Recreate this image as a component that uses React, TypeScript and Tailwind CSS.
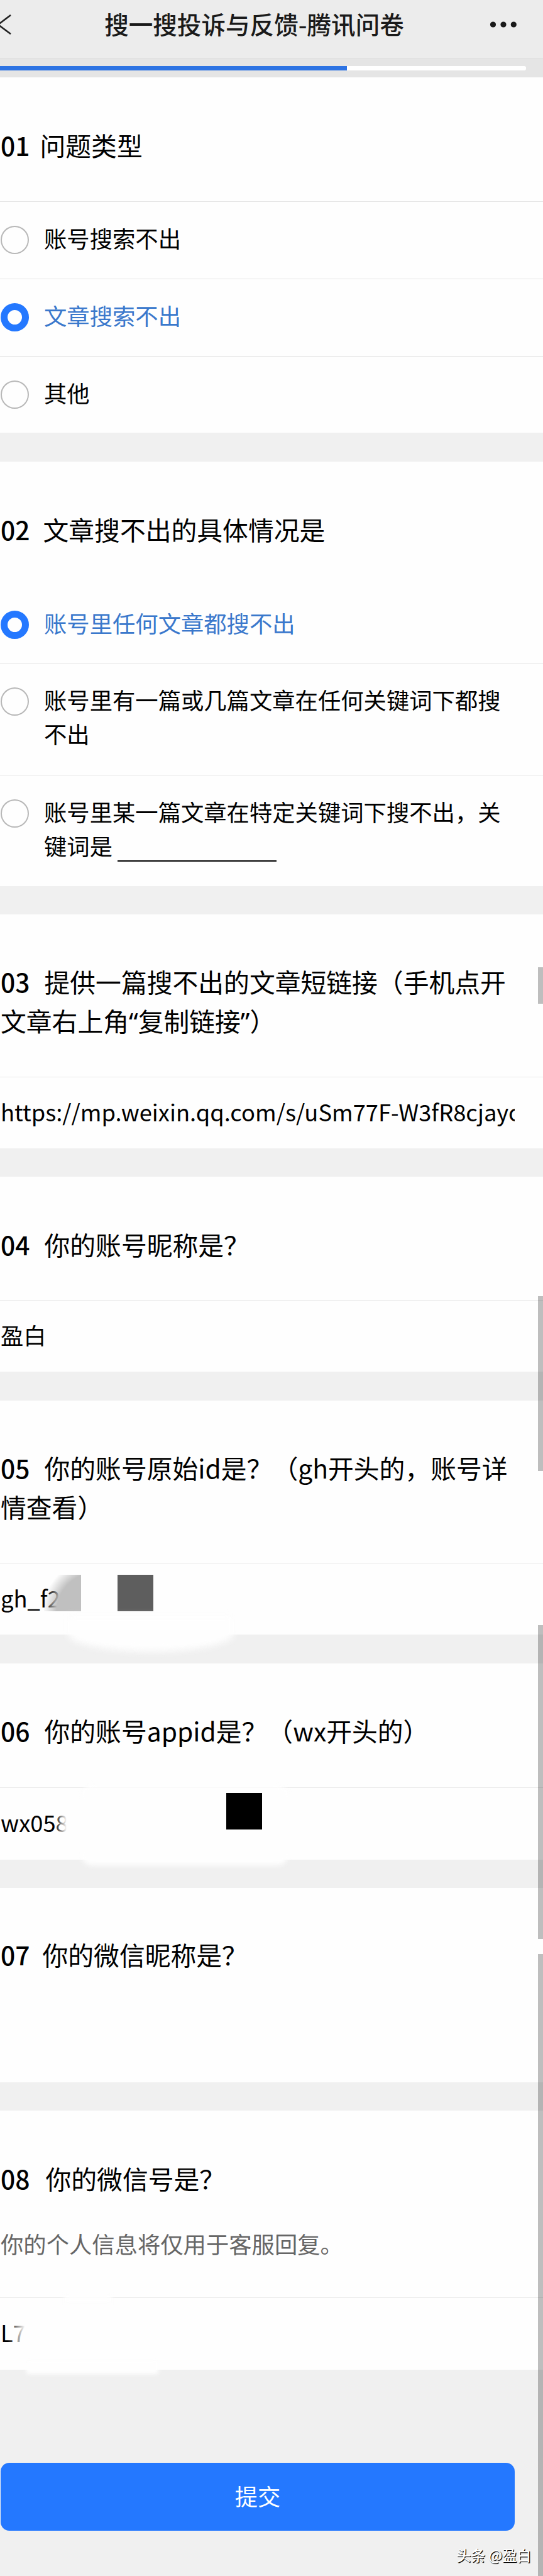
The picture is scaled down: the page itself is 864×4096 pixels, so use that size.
import React from 'react';

const singleOptions = [
  { id: 'account', lines: ['账号搜索不出'], height: 'h-[123px]', checked: false },
  { id: 'article', lines: ['文章搜索不出'], height: 'h-[123px]', checked: true },
  { id: 'other', lines: ['其他'], height: 'h-[122px]', checked: false },
];

const detailOptions = [
  { id: 'all', lines: ['账号里任何文章都搜不出'], height: 'h-[122px]', checked: true },
  { id: 'some', lines: ['账号里有一篇或几篇文章在任何关键词下都搜', '不出'], height: 'h-[178px]', checked: false },
  { id: 'keyword', lines: ['账号里某一篇文章在特定关键词下搜不出，关', '键词是'], height: 'h-[177px]', checked: false, blank: true },
];

function Title({
  no,
  lines,
  className,
  gap = 'mr-[23px]',
}: {
  no: string;
  lines: React.ReactNode[];
  className: string;
  gap?: string;
}) {
  return (
    <div className={`whitespace-nowrap pl-px text-[40.8px] leading-[61.5px] ${className}`}>
      {lines.map((line, i) => (
        <p key={i}>
          {i === 0 && <span className={`font-medium ${gap}`}>{no}</span>}
          {line}
        </p>
      ))}
    </div>
  );
}

function Option({ option, first }: { option: any; first?: boolean }) {
  return (
    <div
      className={`flex gap-6 border-t pl-px ${first ? 'border-transparent' : 'border-[#e4e4e4]'} ${option.height}`}
    >
      <span
        className={`mt-[38px] size-[45px] shrink-0 rounded-full ${
          option.checked ? 'border-[11px] border-[#2478ff]' : 'border-2 border-[#b8b8b8]'
        }`}
      />
      <div
        className={`pt-[30px] whitespace-nowrap text-[36.35px] leading-[54px] ${
          option.checked ? 'text-[#3a78cc]' : 'text-black'
        }`}
      >
        {option.lines.map((line: string, i: number) => (
          <p key={line} className="flex gap-2">
            {line}
            {option.blank && i === 1 && <span className="h-[53px] w-[253px] border-b-2 border-black" />}
          </p>
        ))}
      </div>
    </div>
  );
}

function Answer({ text, className, children }: { text: string; className: string; children?: React.ReactNode }) {
  return (
    <div className={`relative border-t border-[#e8e8e8] pl-px pt-[27px] ${className}`}>
      <p className="w-[818px] overflow-hidden whitespace-nowrap text-[36.35px] leading-[54px]">{text}</p>
      {children}
    </div>
  );
}

function Gap({ className }: { className: string }) {
  return <div className={`bg-[#f0f0f0] ${className}`} />;
}

export default function App() {
  return (
    <div className="relative h-[4096px] w-[864px] overflow-hidden bg-[#fefefe] font-['Noto_Sans_CJK_SC',sans-serif] text-black [text-spacing-trim:space-all]">
      <header className="flex h-[93px] items-center justify-between border-b border-[#dedede] bg-[#ececec] pb-[14px] pr-10">
        <svg className="shrink-0" width="20" height="32" viewBox="0 0 20 32" fill="none" stroke="#222" strokeWidth="2.6">
          <path d="M17 1L-3 16L17 31" />
        </svg>
        <h1 className="ml-[11px] whitespace-nowrap pb-1 text-[38.6px] font-medium leading-[60px] text-[#1a1a1a]">
          搜一搜投诉与反馈-腾讯问卷
        </h1>
        <svg className="shrink-0" width="46" height="12" viewBox="0 0 46 12" fill="#1a1a1a">
          <circle cx="6.5" cy="6" r="4.6" />
          <circle cx="23" cy="6" r="4.6" />
          <circle cx="39.3" cy="6" r="4.6" />
        </svg>
      </header>
      <div className="h-[30px] bg-[#e5e5e5] pt-3">
        <div className="h-[7px] w-[837px] rounded-r-[3px] bg-white">
          <div className="h-full w-[552px] bg-[#2d73e3]" />
        </div>
      </div>

      <Title no="01" lines={['问题类型']} gap="mr-[16px]" className="h-[197px] pt-[77px]" />
      {singleOptions.map((option) => (
        <Option key={option.id} option={option} />
      ))}
      <Gap className="h-[46px]" />

      <Title no="02" lines={['文章搜不出的具体情况是']} gap="mr-[21px]" className="h-[198px] pt-[77px]" />
      {detailOptions.map((option, i) => (
        <Option key={option.id} option={option} first={i === 0} />
      ))}
      <Gap className="h-[45px]" />

      <Title
        no="03"
        lines={[
          '提供一篇搜不出的文章短链接（手机点开',
          <>
            文章右上角<span className="font-['Noto_Sans']">“</span>复制链接<span className="font-['Noto_Sans']">”</span>）
          </>,
        ]}
        className="h-[258px] pt-[76px]"
      />
      <Answer text="https://mp.weixin.qq.com/s/uSm77F-W3fR8cjayo" className="h-[114px]" />
      <Gap className="h-[45px]" />

      <Title no="04" lines={['你的账号昵称是？']} className="h-[196px] pt-[77px]" />
      <Answer text="盈白" className="h-[114px]" />
      <Gap className="h-[46px]" />

      <Title no="05" lines={['你的账号原始id是？（gh开头的，账号详', '情查看）']} className="h-[258px] pt-[76px]" />
      <Answer text="gh_f2" className="h-[114px]">
        <div className="absolute left-[70px] top-[18px] h-[58px] w-[59px] bg-[radial-gradient(circle_at_84px_60px,#c0c0c0_64px,transparent_86px)]" />
        <div className="absolute left-[187px] top-[18px] h-[58px] w-[57px] bg-[#5e5e5e]" />
        <div className="absolute left-[108px] top-[84px] h-[56px] w-[264px] rounded-b-[50%] bg-[#fefefe] blur-[6px]" />
      </Answer>
      <Gap className="h-[46px]" />

      <Title no="06" lines={['你的账号appid是？（wx开头的）']} className="h-[197px] pt-[76px]" />
      <Answer text="wx058" className="h-[115px]">
        <div className="absolute left-[86px] top-[20px] h-[70px] w-[50px] bg-linear-to-r from-transparent to-[#fefefe] to-40%" />
        <div className="absolute left-[130px] top-[-4px] h-[127px] w-[328px] rounded-2xl bg-[#fefefe] blur-[4px]" />
        <div className="absolute left-[360px] top-2 h-[58px] w-[57px] bg-black" />
      </Answer>
      <Gap className="h-[45px]" />

      <Title no="07" lines={['你的微信昵称是？']} gap="mr-[20px]" className="h-[309px] pt-[75px]" />
      <Gap className="h-[45px]" />

      <Title no="08" lines={['你的微信号是？']} gap="mr-[25px]" className="pt-[77px]" />
      <p className="h-[158.5px] pl-px pt-[45px] text-[36.35px] leading-[54px] text-[#666]">你的个人信息将仅用于客服回复。</p>
      <Answer text="L7" className="h-[115px]">
        <div className="absolute left-[12px] top-[20px] h-[70px] w-[50px] bg-linear-to-r from-transparent to-[#fefefe] to-55%" />
        <div className="absolute left-[102px] top-[-4px] h-[10px] w-[76px] bg-[#fefefe] blur-[3px]" />
        <div className="absolute left-[42px] top-[100px] h-[21px] w-[210px] bg-[#fefefe] blur-[3px]" />
      </Answer>

      <footer className="h-[328px] bg-[#f0f0f0] pl-px pt-[148px]">
        <button className="block h-[108px] w-[818px] rounded-[14px] bg-[#2478ff] pb-1 text-[36.35px] text-white">提交</button>
        <p className="whitespace-nowrap pr-[19px] pt-[23px] text-right text-[22.8px] font-medium leading-8 text-white [text-shadow:1px_1px_1px_#000,1px_1px_0_#222]">
          头条 @盈白
        </p>
      </footer>

      {/* scroll indicators */}
      <div className="absolute right-0 top-[1538px] h-[58px] w-2 bg-black/25" />
      <div className="absolute right-0 top-[2061px] h-[278px] w-2 bg-black/25" />
      <div className="absolute right-0 top-[2584px] h-[499px] w-2 bg-black/25" />
      <div className="absolute right-0 top-[3107px] h-[989px] w-2 bg-black/25" />
    </div>
  );
}
